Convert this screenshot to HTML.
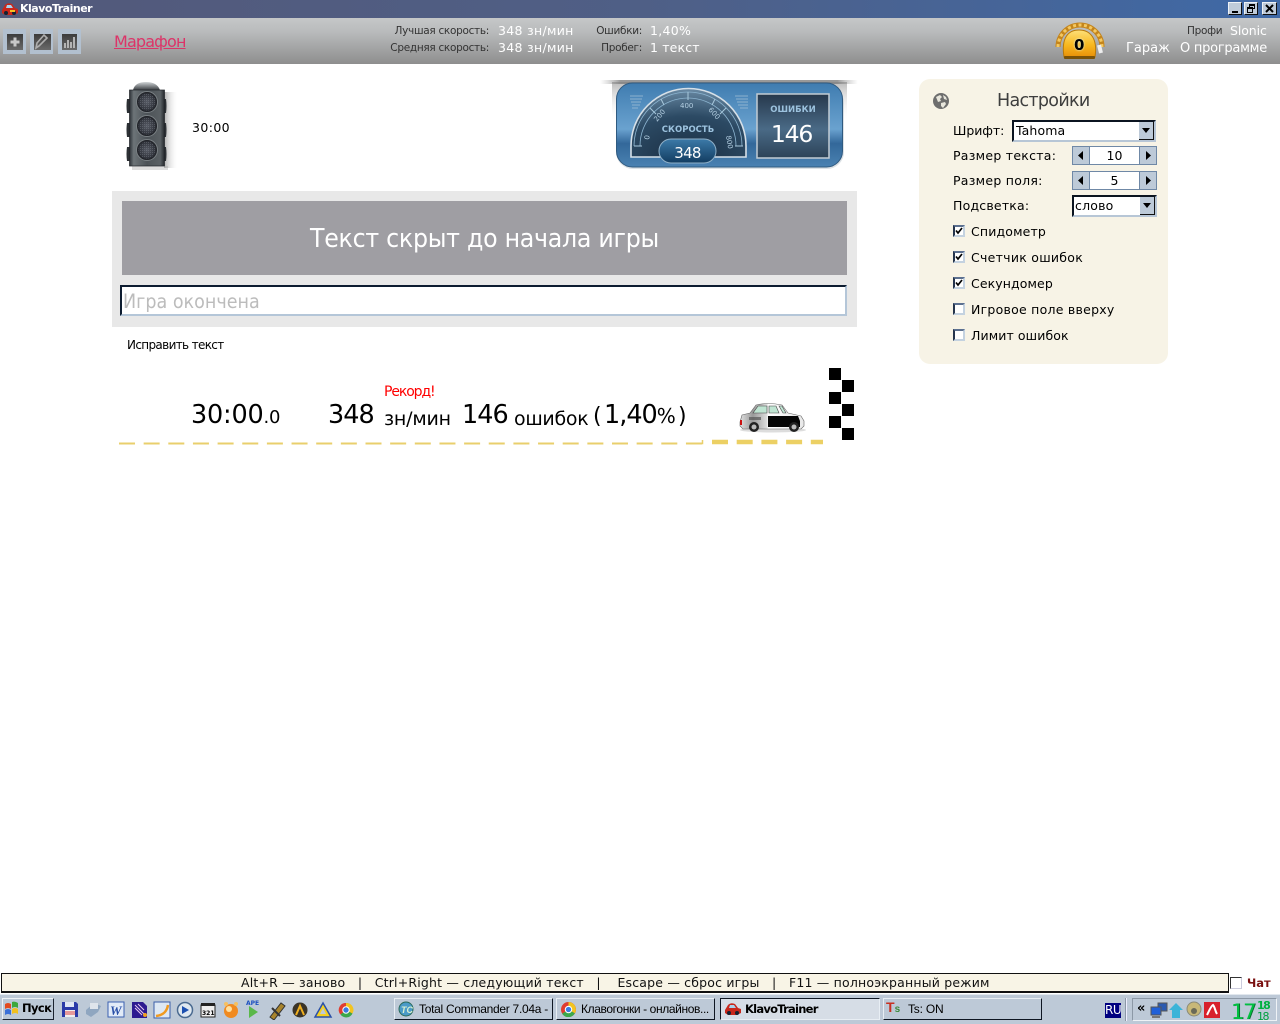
<!DOCTYPE html>
<html lang="ru"><head><meta charset="utf-8"><title>KlavoTrainer</title>
<style>
html,body{margin:0;padding:0;background:#fff;width:1280px;height:1024px;overflow:hidden}
body{position:relative;font-family:"DejaVu Sans","Liberation Sans",sans-serif;color:#000}
.a{position:absolute}
.t{position:absolute;white-space:nowrap;line-height:1}
.s{font-family:"Liberation Sans",sans-serif}
.btn{position:absolute;box-sizing:border-box;background:#bcc9d7;border:1px solid;border-color:#eef2f6 #1c2430 #1c2430 #eef2f6}
.wb{position:absolute;top:2px;width:14px;height:13px;box-sizing:border-box;background:#bfcbd9;border:1px solid;border-color:#eef2f6 #101010 #101010 #eef2f6}
.spin{position:absolute;box-sizing:border-box;width:85px;height:19px;left:1072px;background:#fff;border:1px solid #6f88a6}
.spin i{position:absolute;top:0;width:16px;height:17px;background:#bdcad8}
.spin b{position:absolute;top:3px;left:16px;width:51px;text-align:center;font:400 12.5px/1 "DejaVu Sans",sans-serif}
.sel{position:absolute;box-sizing:border-box;background:#fff;border:2px solid;border-color:#0b1420 #b7c6d6 #b7c6d6 #0b1420}
.sel i{position:absolute;right:0;top:0;width:15px;height:100%;background:#bdcad8;border-right:1px solid #111;border-bottom:1px solid #111;box-sizing:border-box}
.sel i:after{content:"";position:absolute;left:3px;top:6px;border:4px solid transparent;border-top:5px solid #000}
.cb{position:absolute;left:953px;width:12px;height:12px;box-sizing:border-box;background:#fff;border:2px solid;border-color:#5c7090 #c4d2e0 #c4d2e0 #25344c}
.tb{position:absolute;top:998px;height:22px;box-sizing:border-box;overflow:hidden;background:#bdc9d7;border:1px solid;border-color:#e8eef4 #0e1622 #0e1622 #e8eef4;font:12px/1 "Liberation Sans",sans-serif}
.c{position:absolute;width:12px;height:12px;background:#000}
.lb{font-size:10.5px;color:#333;letter-spacing:-.3px;top:26px}
.vl{font-size:12.5px;color:#fff;letter-spacing:.3px}
</style></head><body>

<!-- title bar -->
<div class="a" style="left:0;top:0;width:1280px;height:18px;background:linear-gradient(90deg,#53597a 0,#4f5f86 50%,#3f69a6 100%)"></div>
<svg class="a" style="left:2px;top:2px" width="16" height="14" viewBox="0 0 16 14"><path d="M0 8 3 3Q6 0 10 2l3 4 3 1v4l-4 2H3l-3-2z" fill="#c8271c"/><path d="M5 3h4l2 3H4z" fill="#a8d4ee"/><circle cx="4" cy="11" r="2" fill="#123"/><circle cx="12" cy="11" r="2" fill="#123"/><rect x="8" y="8" width="5" height="2" fill="#f4c020"/></svg>
<div class="t" style="left:20px;top:3px;font-size:11px;font-weight:700;color:#fff;letter-spacing:-.5px">KlavoTrainer</div>
<div class="wb" style="left:1228px"><div class="a" style="left:3px;top:8px;width:6px;height:2px;background:#000"></div></div>
<div class="wb" style="left:1244px"><div class="a" style="left:4px;top:1px;width:6px;height:5px;border:1px solid #000;border-top-width:2px;box-sizing:border-box"></div><div class="a" style="left:2px;top:4px;width:6px;height:6px;background:#bfcbd9;border:1px solid #000;border-top-width:2px;box-sizing:border-box"></div></div>
<div class="wb" style="left:1262px;width:15px"><svg class="a" style="left:2px;top:1px" width="9" height="9"><path d="M1 1 8 8M8 1 1 8" stroke="#000" stroke-width="2"/></svg></div>

<!-- toolbar -->
<div class="a" style="left:0;top:18px;width:1280px;height:46px;background:linear-gradient(#c5c7c8,#b9bbbc 30%,#8e8e8e)"></div>
<div class="a" style="left:3px;top:29px;width:23px;height:25px;background:#b2c0cf"></div>
<div class="a" style="left:30px;top:29px;width:23px;height:25px;background:#b2c0cf"></div>
<div class="a" style="left:58px;top:29px;width:23px;height:25px;background:#b2c0cf"></div>
<svg class="a" style="left:0;top:29px" width="90" height="25">
<defs><linearGradient id="gi" x1="0" x2="0" y1="0" y2="1"><stop offset="0" stop-color="#3c3c3c"/><stop offset="1" stop-color="#6a6a6a"/></linearGradient></defs>
<rect x="7" y="5" width="16" height="16" fill="url(#gi)"/><path d="M13.500 9h3v3h3v3h-3v3h-3v-3h-3v-3h3z" fill="#c8c8c8" transform="translate(0 -.5)"/>
<rect x="34" y="5" width="17" height="16" fill="url(#gi)"/><path d="M36 19l1-5 7-8 3 3-8 8zM37 18l2-1" fill="none" stroke="#aeaeae" stroke-width="1.600"/>
<rect x="62" y="5" width="15" height="16" fill="url(#gi)"/><path d="M64 14h2v5h-2zM67 11h2v8h-2zM70 13h2v6h-2zM73 8h2v11h-2z" fill="#b4b4b4"/>
</svg>
<div class="t" style="left:114px;top:34px;font-size:16px;color:#dc3468;text-decoration:underline;letter-spacing:-.85px">Марафон</div>

<div class="t lb" style="right:791px">Лучшая скорость:</div>
<div class="t lb" style="right:791px;top:43px">Средняя скорость:</div>
<div class="t vl" style="left:498px;top:25px">348 зн/мин</div>
<div class="t vl" style="left:498px;top:42px">348 зн/мин</div>
<div class="t lb" style="right:638px">Ошибки:</div>
<div class="t lb" style="right:638px;top:43px">Пробег:</div>
<div class="t vl" style="left:650px;top:25px">1,40%</div>
<div class="t vl" style="left:650px;top:42px;letter-spacing:.15px">1 текст</div>

<svg class="a" style="left:1052px;top:20px" width="56" height="42" viewBox="0 0 56 42">
<defs><linearGradient id="gy" x1="0" x2="0" y1="0" y2="1"><stop offset="0" stop-color="#fde07a"/><stop offset=".55" stop-color="#f8b820"/><stop offset="1" stop-color="#e89008"/></linearGradient></defs>
<path d="M6 27A22 22 0 0 1 50 27" fill="none" stroke="#c4851c" stroke-width="5"/>
<path d="M6 27A22 22 0 0 1 50 27" fill="none" stroke="#f4c860" stroke-width="3" stroke-dasharray="3 2.500"/>
<path d="M47 25l2 8" stroke="#eee" stroke-width="4"/>
<path d="M12 37C9 18 16 10 27 10s19 8 16 27z" fill="url(#gy)" stroke="#b8790a"/>
<rect x="12" y="36" width="31" height="3" rx="1" fill="#7a5208"/>
</svg>
<div class="t" style="left:1074px;top:38px;font-size:15px;font-weight:700;color:#000;text-shadow:0 0 2px #dff">0</div>

<div class="t" style="left:1187px;top:26px;font-size:10.500px;color:#333;letter-spacing:-.3px">Профи</div>
<div class="t" style="left:1230px;top:25px;font-size:12.500px;color:#fff;letter-spacing:-.1px">Slonic</div>
<div class="t" style="left:1126px;top:42px;font-size:13px;color:#fff;letter-spacing:0">Гараж</div>
<div class="t" style="left:1180px;top:42px;font-size:13px;color:#fff;letter-spacing:-.25px">О программе</div>

<!-- traffic light -->
<svg class="a" style="left:122px;top:80px" width="62" height="92" viewBox="0 0 62 92">
<defs>
<linearGradient id="tl" x1="0" x2="1" y1="0" y2="0"><stop offset="0" stop-color="#2c3136"/><stop offset=".12" stop-color="#6d7478"/><stop offset=".5" stop-color="#4c5257"/><stop offset=".88" stop-color="#5a6064"/><stop offset="1" stop-color="#24282c"/></linearGradient>
<radialGradient id="lens"><stop offset="0" stop-color="#585c66"/><stop offset=".75" stop-color="#32353d"/><stop offset="1" stop-color="#15171b"/></radialGradient>
<linearGradient id="tshadow" x1="0" x2="1" y1="0" y2="0"><stop offset="0" stop-color="#777" stop-opacity=".6"/><stop offset="1" stop-color="#fff" stop-opacity="0"/></linearGradient>
<linearGradient id="tdome" x1="0" x2="0" y1="0" y2="1"><stop offset="0" stop-color="#d0d4d6"/><stop offset="1" stop-color="#3a3e42"/></linearGradient>
<pattern id="mesh" width="2" height="2" patternUnits="userSpaceOnUse"><rect width="1" height="1" fill="#8a8e98" opacity=".35"/></pattern>
</defs>
<rect x="42" y="12" width="14" height="76" fill="url(#tshadow)"/>
<rect x="10" y="86" width="36" height="4" fill="#aaa" opacity=".4"/>
<path d="M11 10Q13 2 24 2t14 8z" fill="url(#tdome)"/>
<path d="M5 19h3v14H5q-1-7 0-14zM5 43h3v14H5q-1-7 0-14zM5 67h3v14H5q-1-7 0-14zM41 19h3q1 7 0 14h-3zM41 43h3q1 7 0 14h-3zM41 67h3q1 7 0 14h-3z" fill="#2c3034"/>
<rect x="7.500" y="10" width="35" height="76" fill="url(#tl)" stroke="#22262a" stroke-width=".7"/>
<g stroke="#7a8084" stroke-width="1"><circle cx="25" cy="22" r="10.500" fill="url(#lens)"/><circle cx="25" cy="46" r="10.500" fill="url(#lens)"/><circle cx="25" cy="70" r="10.500" fill="url(#lens)"/></g>
<g fill="url(#mesh)"><circle cx="25" cy="22" r="8.500"/><circle cx="25" cy="46" r="8.500"/><circle cx="25" cy="70" r="8.500"/></g>
</svg>
<div class="t" style="left:192px;top:122px;font-size:12.500px;letter-spacing:.4px">30:00</div>

<!-- speedometer -->
<svg class="a" style="left:596px;top:76px" width="266" height="98" viewBox="596 76 266 98">
<defs>
<linearGradient id="sb" x1="0" x2="0" y1="0" y2="1"><stop offset="0" stop-color="#3f7cb0"/><stop offset=".55" stop-color="#6aa2cf"/><stop offset=".72" stop-color="#33689a"/><stop offset="1" stop-color="#4a82b2"/></linearGradient>
<radialGradient id="gau" cx=".5" cy="1" r="1"><stop offset="0" stop-color="#1a2e42"/><stop offset=".6" stop-color="#2c4a64"/><stop offset="1" stop-color="#6a8aa4"/></radialGradient>
<linearGradient id="err" x1="0" x2="0" y1="0" y2="1"><stop offset="0" stop-color="#26384c"/><stop offset=".55" stop-color="#4a6a86"/><stop offset="1" stop-color="#2c4358"/></linearGradient>
<linearGradient id="pill" x1="0" x2="0" y1="0" y2="1"><stop offset="0" stop-color="#3c7aa8"/><stop offset="1" stop-color="#123c60"/></linearGradient>
<linearGradient id="top" x1="0" x2="1" y1="0" y2="0"><stop offset="0" stop-color="#bbb" stop-opacity="0"/><stop offset=".08" stop-color="#999"/><stop offset=".92" stop-color="#999"/><stop offset="1" stop-color="#bbb" stop-opacity="0"/></linearGradient>
<linearGradient id="ss" x1="0" x2="0" y1="0" y2="1"><stop offset="0" stop-color="#777"/><stop offset="1" stop-color="#fff" stop-opacity="0"/></linearGradient>
</defs>
<rect x="600" y="80" width="258" height="4" fill="url(#top)"/>
<rect x="612" y="82" width="235" height="40" fill="url(#ss)" opacity=".5"/>
<rect x="616" y="86" width="228" height="83" rx="17" fill="#8a9aa8" opacity=".3"/>
<rect x="616.500" y="83" width="226" height="84" rx="16" fill="url(#sb)" stroke="#2f5a80"/>
<path d="M631 157V146a57.500 57.500 0 0 1 115 0V157z" fill="url(#gau)" stroke="#d6e0e8" stroke-width="1.600"/>
<path d="M640 146a48 48 0 0 1 96 0M634 146a54 54 0 0 1 108 0" fill="none" stroke="#8cb4d0" stroke-width=".8"/>
<g stroke="#a8c8dc" stroke-width="1"><path d="M634 146h8M735 146h8M688 92v8M650 108l6 6M726 108l-6 6M661 99l3 6M715 99l-3 6"/></g>
<g stroke="#a8c4d8" stroke-width="1" opacity=".7"><path d="M630 96h13M630 99h12M631 102h10M632 105h8M632 108h6M735 96h13M736 99h12M737 102h11M738 105h10M740 108h8"/></g>
<g font-family="DejaVu Sans,sans-serif" fill="#b4cfe2" font-size="7"><text x="680" y="108">400</text><text transform="translate(657 122) rotate(-50)">200</text><text transform="translate(708 110) rotate(48)">600</text><text transform="translate(649 140) rotate(-80)">0</text><text transform="translate(726 136) rotate(80)">800</text></g>
<text x="688" y="132" text-anchor="middle" font-family="DejaVu Sans,sans-serif" font-size="8.500" font-weight="700" fill="#9cc2de">СКОРОСТЬ</text>
<rect x="659" y="139" width="57" height="24" rx="12" fill="url(#pill)" stroke="#8fb0c8"/>
<text x="687.500" y="158" text-anchor="middle" font-family="DejaVu Sans,sans-serif" font-size="15" fill="#fff" letter-spacing="-.7">348</text>
<rect x="757" y="94" width="72" height="64" fill="url(#err)" stroke="#c2ccd4" stroke-width="1.500"/>
<text x="793" y="112" text-anchor="middle" font-family="DejaVu Sans,sans-serif" font-size="8.500" font-weight="700" fill="#9cc2de">ОШИБКИ</text>
<text x="791.500" y="142" text-anchor="middle" font-family="DejaVu Sans,sans-serif" font-size="23.500" fill="#fff" letter-spacing="-1.200">146</text>
</svg>

<!-- game box -->
<div class="a" style="left:112px;top:191px;width:745px;height:136px;background:#e8e8e8"></div>
<div class="a" style="left:122px;top:201px;width:725px;height:74px;background:#9f9ea3"></div>
<div class="t" style="left:122px;top:227px;width:725px;text-align:center;font-size:25.500px;color:#fff;letter-spacing:-.3px;transform:scaleX(.93)">Текст скрыт до начала игры</div>
<div class="a" style="left:120px;top:285px;width:727px;height:31px;box-sizing:border-box;background:#fff;border:2px solid;border-color:#0d1c30 #b4c6d8 #b4c6d8 #0d1c30"></div>
<div class="t" style="left:123px;top:292px;font-size:19.500px;color:#bcbcbc;transform:scaleX(.9);transform-origin:left">Игра окончена</div>
<div class="t" style="left:127px;top:339px;font-size:12px;letter-spacing:-.65px">Исправить текст</div>

<!-- result -->
<div class="t" style="left:384px;top:385px;font-size:14px;color:#f00;letter-spacing:-1.100px">Рекорд!</div>
<div class="t" style="left:191px;top:403px;font-size:25.500px;letter-spacing:-.2px">30:00<span style="font-size:18px">.0</span></div>
<div class="t" style="left:328px;top:403px;font-size:25.500px;letter-spacing:-1px">348</div>
<div class="t" style="left:384px;top:410px;font-size:19px;letter-spacing:-.2px">зн/мин</div>
<div class="t" style="left:462px;top:403px;font-size:25.500px;letter-spacing:-1px">146</div>
<div class="t" style="left:514px;top:410px;font-size:19px;letter-spacing:-.3px">ошибок</div>
<div class="t" style="left:593px;top:406px;font-size:22px">(</div>
<div class="t" style="left:604px;top:403px;font-size:25.500px;letter-spacing:-1px">1,40<span style="font-size:20px">%</span></div>
<div class="t" style="left:678px;top:406px;font-size:22px">)</div>

<!-- road -->
<svg class="a" style="left:112px;top:436px" width="720" height="12" viewBox="112 436 720 12">
<path d="M119 443.500H703" stroke="#e9cf6c" stroke-width="2" stroke-dasharray="16 8.650" fill="none"/>
<path d="M687 443.500H702.500V440" stroke="#e9cf6c" stroke-width="1.500" fill="none"/>
<path d="M712 442H823" stroke="#ecd064" stroke-width="4.500" stroke-dasharray="16 8.700" fill="none"/>
</svg>
<svg class="a" style="left:738px;top:400px" width="70" height="34" viewBox="0 0 70 34">
<defs><linearGradient id="cr" x1="0" x2="1" y1="0" y2="0"><stop offset="0" stop-color="#e0e0e0"/><stop offset=".2" stop-color="#999"/><stop offset=".42" stop-color="#ddd"/><stop offset=".44" stop-color="#fff"/><stop offset="1" stop-color="#e8e8e8"/></linearGradient></defs>
<ellipse cx="35" cy="30" rx="33" ry="2.500" fill="#ddd"/>
<path d="M2 22l2-7 8-2 6-8Q30 2 44 5l6 8 13 3 3 5v5l-3 3H5l-3-3z" fill="url(#cr)" stroke="#666" stroke-width=".6"/>
<path d="M30 16h30l2 5v6H30z" fill="#050505"/>
<path d="M29 6h-9l-5 7h14zM31 6v7h10l-3-7zM41 6l4 7h3l-4-7z" fill="#bfe4d2" stroke="#444" stroke-width=".6"/>
<path d="M11 17h12v3H11z" fill="#555" opacity=".7"/>
<rect x="2" y="20" width="2" height="5" fill="#c11"/>
<circle cx="16" cy="27" r="5" fill="#222"/><circle cx="16" cy="27" r="2.500" fill="#bbb"/>
<circle cx="56" cy="27" r="5" fill="#222"/><circle cx="56" cy="27" r="2.500" fill="#bbb"/>
</svg>
<div class="c" style="left:829px;top:368px"></div><div class="c" style="left:842px;top:380px"></div>
<div class="c" style="left:829px;top:392px"></div><div class="c" style="left:842px;top:404px"></div>
<div class="c" style="left:829px;top:416px"></div><div class="c" style="left:842px;top:428px"></div>

<!-- settings -->
<div class="a" style="left:919px;top:79px;width:249px;height:285px;background:#f7f3e6;border-radius:11px"></div>
<svg class="a" style="left:932px;top:92px" width="18" height="18" viewBox="0 0 18 18"><circle cx="9" cy="9" r="8" fill="#6e6e6e"/><path d="M4 5l4-2 2 2-2 2 1 2-3 1zM11 3l3 2 1 3-3-1zM9 11l4-1 1 2-3 4-2-2z" fill="#e8e6dc"/></svg>
<div class="t" style="left:997px;top:93px;font-size:17.500px;color:#3e3e3e;letter-spacing:-.7px">Настройки</div>
<div class="t" style="left:953px;top:125px;font-size:12.500px;letter-spacing:-.05px">Шрифт:</div>
<div class="sel" style="left:1012px;top:120px;width:144px;height:22px"><span class="t" style="left:2px;top:3px;font-size:12.500px;letter-spacing:.1px">Tahoma</span><i></i></div>
<div class="t" style="left:953px;top:150px;font-size:12.500px;letter-spacing:.27px">Размер текста:</div>
<div class="spin" style="top:146px"><i style="left:0;border-right:1px solid #6f88a6"></i><svg class="a" style="left:5px;top:4px" width="6" height="9"><path d="M5 0v9L0 4.500z"/></svg><b>10</b><i style="right:0;border-left:1px solid #6f88a6"></i><svg class="a" style="right:4px;top:4px" width="6" height="9"><path d="M0 0v9l5-4.500z"/></svg></div>
<div class="t" style="left:953px;top:175px;font-size:12.500px;letter-spacing:.27px">Размер поля:</div>
<div class="spin" style="top:171px"><i style="left:0;border-right:1px solid #6f88a6"></i><svg class="a" style="left:5px;top:4px" width="6" height="9"><path d="M5 0v9L0 4.500z"/></svg><b>5</b><i style="right:0;border-left:1px solid #6f88a6"></i><svg class="a" style="right:4px;top:4px" width="6" height="9"><path d="M0 0v9l5-4.500z"/></svg></div>
<div class="t" style="left:953px;top:200px;font-size:12.500px;letter-spacing:.2px">Подсветка:</div>
<div class="sel" style="left:1072px;top:195px;width:85px;height:22px"><span class="t" style="left:1px;top:3px;font-size:12.500px;letter-spacing:.2px">слово</span><i></i></div>

<div class="cb" style="top:225px"><svg class="a" style="left:0;top:0" width="8" height="8"><path d="M1 3.500 3 6 7 1" fill="none" stroke="#000" stroke-width="1.700"/></svg></div>
<div class="t" style="left:971px;top:226px;font-size:12.500px;letter-spacing:.15px">Спидометр</div>
<div class="cb" style="top:251px"><svg class="a" style="left:0;top:0" width="8" height="8"><path d="M1 3.500 3 6 7 1" fill="none" stroke="#000" stroke-width="1.700"/></svg></div>
<div class="t" style="left:971px;top:252px;font-size:12.500px;letter-spacing:.27px">Счетчик ошибок</div>
<div class="cb" style="top:277px"><svg class="a" style="left:0;top:0" width="8" height="8"><path d="M1 3.500 3 6 7 1" fill="none" stroke="#000" stroke-width="1.700"/></svg></div>
<div class="t" style="left:971px;top:278px;font-size:12.500px;letter-spacing:.1px">Секундомер</div>
<div class="cb" style="top:303px"></div>
<div class="t" style="left:971px;top:304px;font-size:12.500px;letter-spacing:.25px">Игровое поле вверху</div>
<div class="cb" style="top:329px"></div>
<div class="t" style="left:971px;top:330px;font-size:12.500px;letter-spacing:.1px">Лимит ошибок</div>

<!-- hint bar -->
<div class="a" style="left:1px;top:973px;width:1228px;height:20px;box-sizing:border-box;background:#f8f4e6;border:solid #111;border-width:1px 1px 2px 1px"></div>
<div class="t" style="left:241px;top:977px;font-size:12.500px;letter-spacing:.19px;color:#111;white-space:pre">Alt+R — заново   |   Ctrl+Right — следующий текст   |    Escape — сброс игры   |   F11 — полноэкранный режим</div>
<div class="a" style="left:1230px;top:977px;width:12px;height:12px;box-sizing:border-box;background:#fff;border:1px solid #333;border-right-color:#ccd;border-bottom-color:#ccd"></div>
<div class="t" style="left:1247px;top:978px;font-size:11.500px;font-weight:700;color:#7a1010">Чат</div>

<!-- taskbar -->
<div class="a" style="left:0;top:994px;width:1280px;height:30px;background:#bdc9d7;border-top:1px solid #e2e8ee;box-sizing:border-box"></div>
<div class="btn" style="left:2px;top:998px;width:52px;height:22px"></div>
<svg class="a" style="left:4px;top:1001px" width="16" height="16" viewBox="0 0 16 16"><path d="M1 3q3-2 6 0v5q-3-2-6 0z" fill="#e24a20"/><path d="M8 1q3-1 6 1v5q-3-2-6 0z" fill="#3ca83c"/><path d="M1 9q3-2 6 0v5q-3-2-6 0z" fill="#3a70d8"/><path d="M8 8q3-2 6 0v5q-3-2-6 0z" fill="#f0c020"/></svg>
<div class="t" style="left:22px;top:1003px;font-size:11.500px;font-weight:700;letter-spacing:-.6px">Пуск</div>

<svg class="a" style="left:60px;top:1000px" width="296" height="20" viewBox="60 1000 296 20">
<path d="M62 1002h14l2 2v13H62z" fill="#2a3aa8"/><rect x="65" y="1002" width="9" height="5" fill="#dfe6f4"/><rect x="65" y="1010" width="10" height="7" fill="#f0f0f0"/><path d="M65 1012h10M65 1014h10" stroke="#d44"/>
<path d="M86 1010l8-7 7 3-3 6-7 5-5-3z" fill="#8fa6c0"/><path d="M90 1003h8v6h-8z" fill="#dfe5ec"/>
<rect x="108" y="1002" width="16" height="15" fill="#e2ebf8" stroke="#3a60b0"/><text x="110" y="1015" font-family="Liberation Serif,serif" font-size="13" font-weight="700" font-style="italic" fill="#2a50a8">W</text>
<path d="M132 1002h11l4 4v12h-15z" fill="#2c1a90"/><path d="M135 1005l9 9M135 1008l7 7M138 1004l6 6" stroke="#e8c8f0"/><circle cx="145" cy="1015" r="2" fill="#f0a020"/>
<rect x="154" y="1002" width="16" height="16" fill="#dde8f4" stroke="#3a5ea8"/><path d="M156 1016c8-1 11-5 12-11" stroke="#f09a20" stroke-width="2.500" fill="none"/>
<circle cx="185" cy="1010" r="7.500" fill="#dfe8f0" stroke="#4a6a90" stroke-width="1.500"/><path d="M182 1006l7 4-7 4z" fill="#1c50b0"/>
<rect x="201" y="1005" width="14" height="12" fill="#eee" stroke="#222"/><rect x="201" y="1003" width="14" height="3" fill="#222"/><text x="202" y="1015" font-family="DejaVu Sans,sans-serif" font-size="6" font-weight="700">321</text>
<circle cx="231" cy="1011" r="7" fill="#f08a20"/><circle cx="229" cy="1009" r="3" fill="#ffe0a0"/><circle cx="226" cy="1004" r="2" fill="#f6c060"/><circle cx="236" cy="1004" r="2" fill="#f6c060"/>
<text x="246" y="1005" font-family="DejaVu Sans,sans-serif" font-size="6" font-weight="700" fill="#1c50c0">APE</text><path d="M249 1006l9 6-9 6z" fill="#5ab84a"/>
<path d="M270 1017l11-14 4 3-11 14z" fill="#a8842c" stroke="#333"/><path d="M272 1008l8 8" stroke="#333" stroke-width="2"/>
<circle cx="300" cy="1010" r="7.500" fill="#3a3428"/><path d="M296 1015l4-9 4 9" stroke="#f0b020" stroke-width="2" fill="none"/>
<path d="M323 1003l8 14h-16z" fill="#f4d020" stroke="#2a50a8" stroke-width="1.500"/><path d="M323 1008l-3 6h6z" fill="#bdc9d7"/>
<circle cx="346" cy="1010" r="7" fill="#e03c30"/><path d="M346 1010l6.500 3.500a7 7 0 0 1-12 1z" fill="#3ca84a"/><path d="M346 1010l-6 4a7 7 0 0 1 6-11z" fill="#e03c30"/><path d="M346 1003a7 7 0 0 1 6.500 10.500L346 1010z" fill="#f2c420"/><circle cx="346" cy="1010" r="3.200" fill="#3a7ae0" stroke="#fff"/>
</svg>

<div class="tb" style="left:394px;width:159px"><span class="t" style="left:24px;top:4px;letter-spacing:-.28px">Total Commander 7.04a - ...</span></div>
<svg class="a" style="left:398px;top:1001px" width="16" height="16"><circle cx="8" cy="8" r="7" fill="#4a9ac8" stroke="#2a6a58"/><text x="3" y="12" font-family="Liberation Sans,sans-serif" font-size="9" font-style="italic" font-weight="700" fill="#d8f0d0">TC</text></svg>
<div class="tb" style="left:556px;width:159px"><span class="t" style="left:24px;top:4px;letter-spacing:-.38px">Клавогонки - онлайнов...</span></div>
<svg class="a" style="left:561px;top:1002px" width="15" height="15" viewBox="0 0 14 14"><circle cx="7" cy="7" r="7" fill="#e03c30"/><path d="M7 7l6 3.500a7 7 0 0 1-12 .500z" fill="#3ca84a"/><path d="M7 0a7 7 0 0 1 6 10.500L7 7z" fill="#f2c420"/><circle cx="7" cy="7" r="3" fill="#3a7ae0" stroke="#fff"/></svg>
<div class="tb" style="left:720px;width:160px;background:#d6dde6;border-color:#0e1622 #e8eef4 #e8eef4 #0e1622"><span class="t" style="left:24px;top:5px;font-weight:700;font-size:11.500px;font-family:'DejaVu Sans',sans-serif;letter-spacing:-.75px">KlavoTrainer</span></div>
<svg class="a" style="left:725px;top:1002px" width="16" height="14" viewBox="0 0 16 14"><path d="M0 8 3 3Q6 0 10 2l3 4 3 1v4l-4 2H3l-3-2z" fill="#c8271c"/><path d="M5 3h4l2 3H4z" fill="#a8d4ee"/><circle cx="4" cy="11" r="2" fill="#123"/><circle cx="12" cy="11" r="2" fill="#123"/></svg>
<div class="tb" style="left:883px;width:159px"><span class="t" style="left:24px;top:4px;letter-spacing:-.2px">Ts: ON</span></div>
<div class="t s" style="left:886px;top:1000px;font-size:14px;font-weight:700;color:#c83020">T<span style="font-size:10px;color:#3a8a3a">s</span></div>

<div class="a" style="left:1105px;top:1003px;width:16px;height:15px;background:#000080;color:#fff;font:12px/15px 'DejaVu Sans',sans-serif;text-align:center;letter-spacing:-.5px">RU</div>
<div class="a" style="left:1125px;top:998px;width:1px;height:23px;background:#8c98a6;border-right:1px solid #eef"></div>
<div class="a" style="left:1132px;top:998px;width:145px;height:23px;box-sizing:border-box;border:1px solid;border-color:#8c98a6 #eef2f6 #eef2f6 #8c98a6"></div>
<div class="t" style="left:1137px;top:1002px;font-size:13px;font-weight:700">«</div>
<svg class="a" style="left:1150px;top:1001px" width="80" height="18" viewBox="1150 1001 80 18">
<rect x="1158" y="1003" width="9" height="8" fill="#2a5ab0" stroke="#555"/><rect x="1151" y="1007" width="10" height="8" fill="#2060d8" stroke="#555"/><rect x="1152" y="1016" width="8" height="2" fill="#777"/>
<path d="M1176 1003l7 7h-3v8h-8v-8h-3z" fill="#3cb4d8"/>
<circle cx="1194" cy="1009" r="7" fill="#c8b878" stroke="#8a8a78"/><circle cx="1194" cy="1011" r="3" fill="#6a6a58"/>
<rect x="1204" y="1002" width="16" height="16" fill="#d8202c"/><path d="M1207 1015c2-4 4-9 6-10 2 2 2 6 4 9" stroke="#fff" stroke-width="2" fill="none"/>
</svg>
<div class="t" style="left:1231px;top:1002px;font-size:21px;color:#00c040;letter-spacing:-1.200px;text-shadow:1px 0 0 #0a6a30">17</div>
<div class="t" style="left:1257px;top:1000px;font-size:11px;font-weight:700;color:#00b040;letter-spacing:-1.500px">18</div>
<div class="t" style="left:1257px;top:1011px;font-size:11px;color:#00a040;letter-spacing:-1.500px">18</div>
</body></html>
